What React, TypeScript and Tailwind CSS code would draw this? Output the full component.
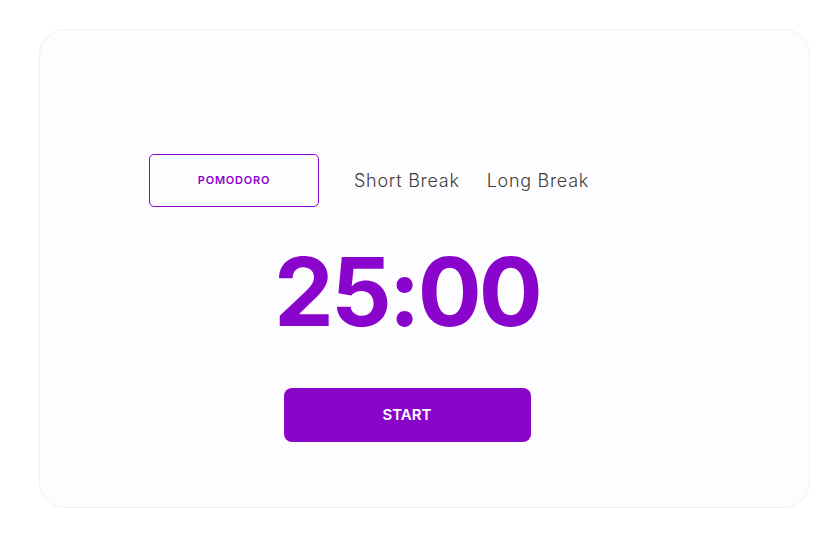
import React, { useState } from "react";

const tabs = ["Pomodoro", "Short Break", "Long Break"];

const App: React.FC = () => {
  const [active, setActive] = useState(0);

  return (
    <div
      className="w-full h-[534px] bg-white pt-[29px] pl-[39px]"
      style={{ fontFamily: "Inter, 'Noto Sans', sans-serif" }}
    >
      <div className="w-[771px] h-[479px] rounded-[26px] border border-[#f2f0f3] bg-[#fdfcfe] pt-[124px] pl-[109px]">
        <div className="w-[516px] flex flex-col">
          <div className="flex items-center">
            {tabs.map((t, i) =>
              i === active ? (
                <button
                  key={t}
                  onClick={() => setActive(i)}
                  className="w-[170px] h-[53px] rounded-[5px] border border-[#8a05cb] text-[#8a05cb] text-[11px] font-semibold tracking-[0.07em] uppercase"
                >
                  {t}
                </button>
              ) : (
                <button
                  key={t}
                  onClick={() => setActive(i)}
                  className={`text-[18px] font-light text-[#3d3d3d] tracking-[0.04em] ${
                    i === 1 ? "ml-[35px]" : "ml-[27px]"
                  }`}
                >
                  {t}
                </button>
              )
            )}
          </div>

          <div className="mt-[37px] h-[95px] flex items-center justify-center text-[95px] font-bold leading-none text-[#8a05cb] tracking-[-0.03em]">
            25:00
          </div>

          <div className="mt-[49px] flex justify-center">
            <button className="w-[247px] h-[54px] rounded-[8px] bg-[#8906c9] text-white text-[15px] font-semibold">
              START
            </button>
          </div>
        </div>
      </div>
    </div>
  );
};

export default App;
